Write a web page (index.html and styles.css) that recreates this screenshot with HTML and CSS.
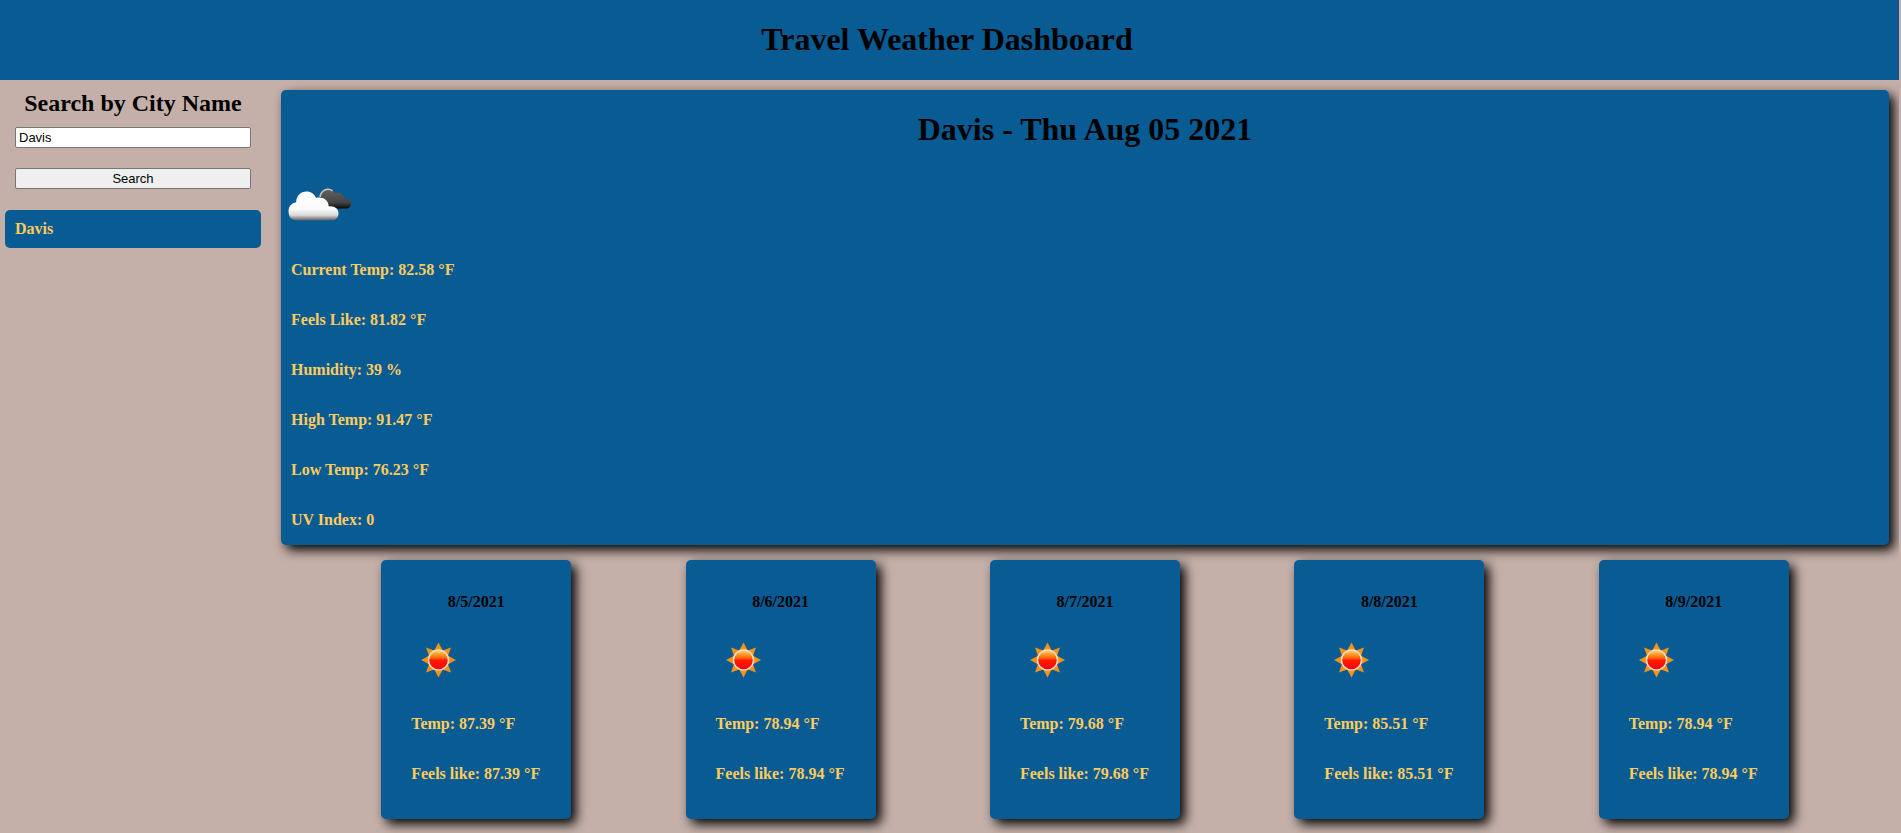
FILE: index.html
```
<!DOCTYPE html>
<html lang="en">
<head>
<meta charset="utf-8">
<title>Travel Weather Dashboard</title>
<link rel="stylesheet" href="styles.css">
</head>
<body>
<svg class="defs" aria-hidden="true">
  <defs>
    <linearGradient id="orb" x1="0" y1="0" x2="0" y2="1">
      <stop offset="0" stop-color="#ffdf8a"/>
      <stop offset="0.15" stop-color="#ffb13c"/>
      <stop offset="0.38" stop-color="#ff6a10"/>
      <stop offset="0.52" stop-color="#ff1a04"/>
      <stop offset="1" stop-color="#ff0000"/>
    </linearGradient>
    <linearGradient id="white-cloud" x1="0" y1="0" x2="0" y2="1">
      <stop offset="0" stop-color="#ffffff"/>
      <stop offset="0.6" stop-color="#fbfbfb"/>
      <stop offset="0.82" stop-color="#d8d8d8"/>
      <stop offset="0.93" stop-color="#8c8c8c"/>
      <stop offset="1" stop-color="#55616b"/>
    </linearGradient>
    <linearGradient id="dark-cloud" x1="0" y1="0" x2="0" y2="1">
      <stop offset="0" stop-color="#626262"/>
      <stop offset="0.7" stop-color="#444444"/>
      <stop offset="1" stop-color="#080808"/>
    </linearGradient>
    <symbol id="sun" viewBox="0 0 54 54">
      <path fill="#ef9418" d="M27.500 9.500L31.800 17.500L40 14.500L37 22.700L45 27L37 31.300L40 39.500L31.800 36.500L27.500 44.500L23.200 36.500L15 39.500L18 31.300L10 27L18 22.700L15 14.500L23.200 17.500Z"/>
      <circle cx="27.500" cy="27" r="10" fill="url(#orb)" stroke="#fbd9c0" stroke-width="1.500"/>
    </symbol>
  </defs>
</svg>
<header class="header"><h1>Travel Weather Dashboard</h1></header>
<div class="layout">
  <aside class="sidebar">
    <form class="search">
      <h2><label for="city">Search by City Name</label></h2>
      <input id="city" type="text" value="Davis">
      <button type="button">Search</button>
    </form>
    <button class="history" type="button">Davis</button>
  </aside>
  <main class="main">
    <section class="current">
      <h1>Davis - Thu Aug 05 2021</h1>
      <svg class="clouds" viewBox="0 0 76 76" role="img" aria-label="Broken clouds">
        <path fill="url(#dark-cloud)" d="M38 29C38 23 42 19.500 46.500 19.500C50 19.500 52.500 21.500 54 24.300C58.500 22.500 62.500 25 63.500 29.500C67.500 29 70 31.500 70 34.500C70 37.500 68 39.500 65 39.500L44 39.500Z"/>
        <path fill="none" stroke="#c4c4c4" stroke-width="1.500" d="M39 28C39.500 23.500 43 20.300 47 20.300C49 20.300 50.500 21 51.500 22"/>
        <path fill="url(#white-cloud)" d="M15.500 51.500C10.500 51.500 7.500 47.500 7.500 42.500C7.500 37.500 10.500 34 15.200 33.300C15.200 27 19.500 22.500 25.500 22.500C30 22.500 33.500 25 35 29C41 27.500 47.500 30.500 47.700 37.300C53.500 36.500 57.500 39.500 57.500 44.500C57.500 48.500 54.500 51.500 51 51.500Z"/>
      </svg>
      <p>Current Temp: 82.58 °F</p>
      <p>Feels Like: 81.82 °F</p>
      <p>Humidity: 39 %</p>
      <p>High Temp: 91.47 °F</p>
      <p>Low Temp: 76.23 °F</p>
      <p>UV Index: 0</p>
    </section>
    <section class="forecast">
      <article class="card"><h4>8/5/2021</h4><svg class="sun" role="img" aria-label="Clear sky"><use href="#sun"/></svg><p>Temp: 87.39 °F</p><p>Feels like: 87.39 °F</p></article>
      <article class="card"><h4>8/6/2021</h4><svg class="sun" role="img" aria-label="Clear sky"><use href="#sun"/></svg><p>Temp: 78.94 °F</p><p>Feels like: 78.94 °F</p></article>
      <article class="card"><h4>8/7/2021</h4><svg class="sun" role="img" aria-label="Clear sky"><use href="#sun"/></svg><p>Temp: 79.68 °F</p><p>Feels like: 79.68 °F</p></article>
      <article class="card"><h4>8/8/2021</h4><svg class="sun" role="img" aria-label="Clear sky"><use href="#sun"/></svg><p>Temp: 85.51 °F</p><p>Feels like: 85.51 °F</p></article>
      <article class="card"><h4>8/9/2021</h4><svg class="sun" role="img" aria-label="Clear sky"><use href="#sun"/></svg><p>Temp: 78.94 °F</p><p>Feels like: 78.94 °F</p></article>
    </section>
  </main>
</div>
</body>
</html>
```
FILE: styles.css
```
* {
  box-sizing: border-box;
}

body {
  margin: 0 2px 0 0;
  background: #c5b0a9;
  color: #000;
  font: 16px/18px "Liberation Serif", "Times New Roman", serif;
}

h1, h2, h4, p {
  margin: 0;
}

h1 {
  font-size: 32px;
  line-height: 36px;
  text-align: center;
}

.defs {
  position: absolute;
  width: 0;
  height: 0;
}

.header {
  padding: 21px 5px 23px 0;
  background: #085b93;
}

.layout {
  display: flex;
}

.sidebar {
  flex: none;
  width: 271px;
  padding: 10px 10px 0 5px;
}

.search {
  display: flex;
  flex-direction: column;
  padding: 0 10px 21px;
}

.search h2 {
  margin-bottom: 10px;
  font-size: 24px;
  line-height: 27px;
  text-align: center;
}

.search input,
.search button {
  height: 21px;
  padding: 1px 3px;
  border: 1px solid #767676;
  border-radius: 2px;
  color: #000;
  font: 13px/15px "Liberation Sans", Arial, sans-serif;
}

.search input {
  margin-bottom: 20px;
  background: #fff;
}

.search button {
  background: #efefef;
}

.history {
  display: block;
  width: 100%;
  padding: 10px;
  border: 0;
  border-radius: 5px;
  background: #085b93;
  color: #ffcc5c;
  font: bold 16px/18px "Liberation Serif", "Times New Roman", serif;
  text-align: left;
}

.main {
  flex: 1;
  min-width: 0;
  padding: 10px 0 14px;
}

.current,
.card {
  border-radius: 5px;
  background: #085b93;
  box-shadow: 5px 5px 12px #000;
}

.current {
  margin: 0 10px 15px;
  padding-top: 21px;
}

.clouds {
  display: block;
  width: 76px;
  height: 76px;
  margin-top: 22px;
}

.current p {
  padding: 16px 10px;
  color: #ffcc5c;
  font-weight: bold;
}

.forecast {
  display: flex;
  justify-content: space-around;
  padding: 0 53px;
}

.card {
  width: 190px;
  padding: 33px 30px 20px;
}

.card h4 {
  font-size: 16px;
  text-align: center;
}

.sun {
  display: block;
  width: 54px;
  height: 54px;
  margin: 22px 0 12px;
}

.card p {
  padding: 16px 0;
  color: #ffcc5c;
  font-weight: bold;
  white-space: nowrap;
}
```
